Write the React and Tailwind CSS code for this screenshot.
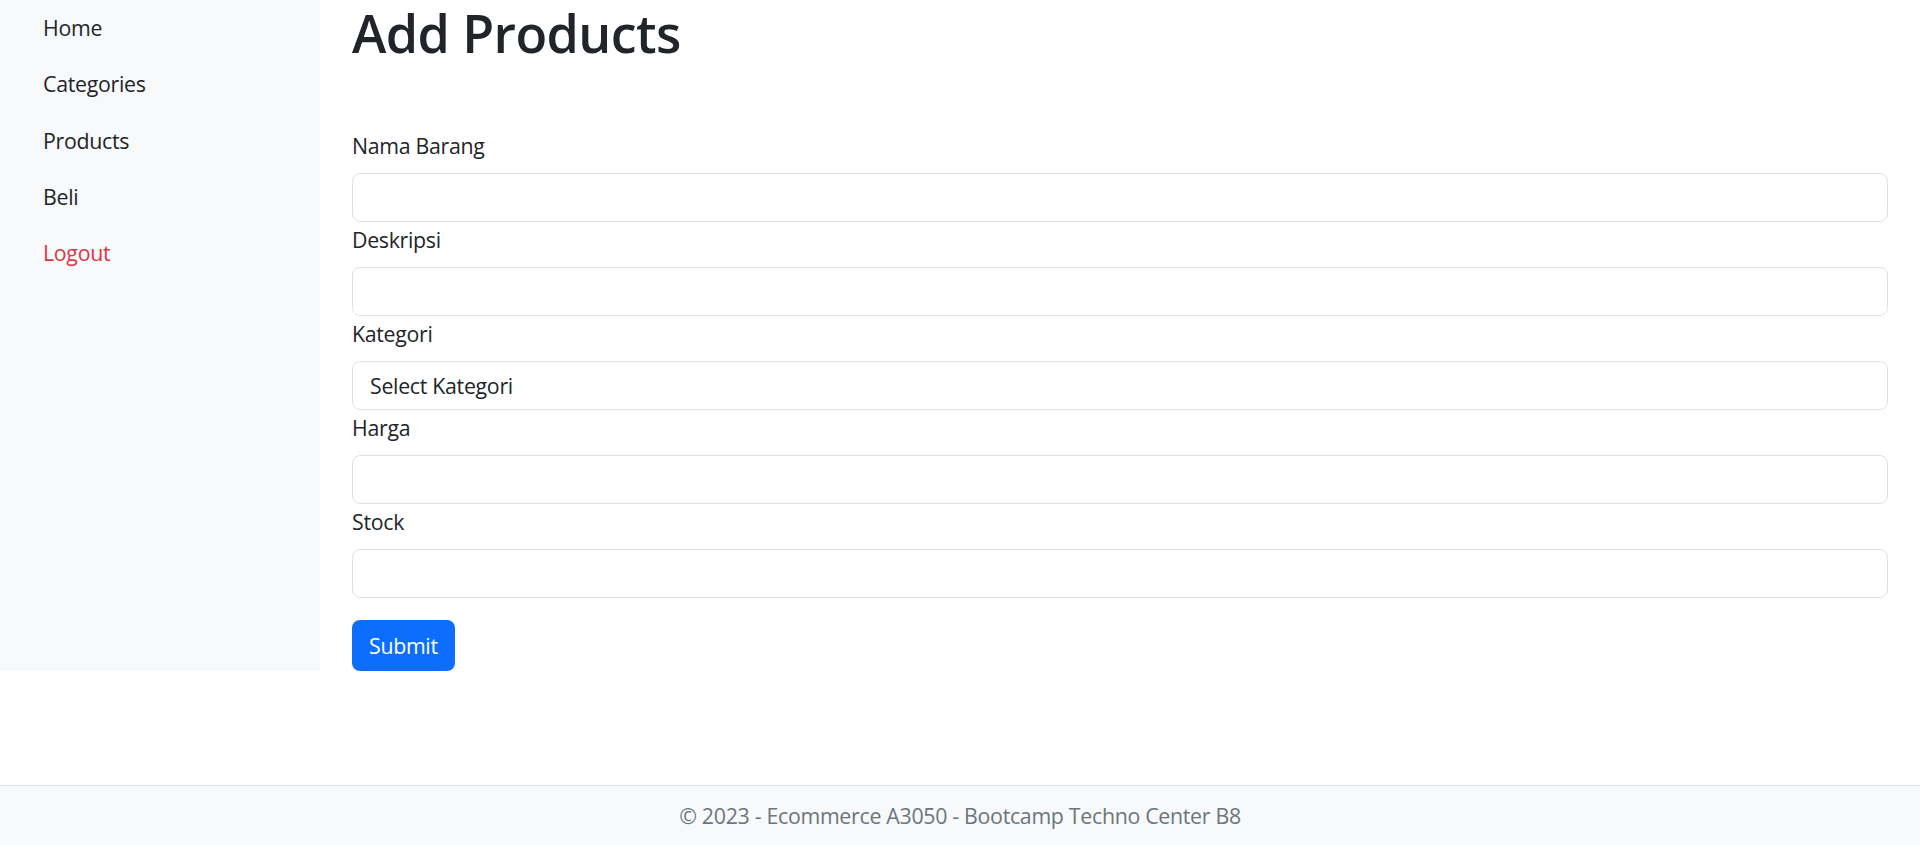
import { useState } from 'react';

const navItems = [
  { label: 'Home' },
  { label: 'Categories' },
  { label: 'Products' },
  { label: 'Beli' },
  { label: 'Logout', danger: true },
];

const fields = [
  { id: 'nama', label: 'Nama Barang' },
  { id: 'deskripsi', label: 'Deskripsi' },
  { id: 'kategori', label: 'Kategori', select: true },
  { id: 'harga', label: 'Harga' },
  { id: 'stock', label: 'Stock' },
];

export default function App() {
  const [form, setForm] = useState({ nama: '', deskripsi: '', kategori: '', harga: '', stock: '' });

  const update = (id) => (e) => setForm({ ...form, [id]: e.target.value });

  return (
    <div className="flex min-h-screen flex-col bg-white font-['Segoe_UI','Open_Sans',sans-serif] text-[21.33px] tracking-[-0.3px] text-[#212529]">
      <div className="flex">
        <aside className="w-[320px] shrink-0 bg-[#f8f9fa]">
          <nav className="flex flex-col">
            {navItems.map((item) => (
              <a
                key={item.label}
                href="#"
                className={`flex h-[56.3px] items-center pl-[43px] leading-[32px] ${
                  item.danger ? 'text-[#dc3545]' : 'text-[#212529]'
                }`}
              >
                {item.label}
              </a>
            ))}
          </nav>
        </aside>

        <main className="flex-1 px-[32px]">
          <h1 className="pt-[2px] text-[52px] font-semibold leading-[62px] tracking-[-0.6px]">Add Products</h1>

          <form className="mt-[64px]" onSubmit={(e) => e.preventDefault()}>
            {fields.map((f) => (
              <div key={f.id}>
                <label htmlFor={f.id} className="mb-[11px] block pt-[2px] leading-[32px]">
                  {f.label}
                </label>
                {f.select ? (
                  <select
                    id={f.id}
                    value={form[f.id]}
                    onChange={update(f.id)}
                    className="block h-[49px] w-full appearance-none rounded-[8px] border border-[#dee2e6] bg-white px-[17px] text-[21.33px] tracking-[-0.3px] text-[#212529] outline-none"
                  >
                    <option value="">Select Kategori</option>
                  </select>
                ) : (
                  <input
                    id={f.id}
                    type="text"
                    value={form[f.id]}
                    onChange={update(f.id)}
                    className="block h-[49px] w-full rounded-[8px] border border-[#dee2e6] bg-white px-[17px] text-[21.33px] outline-none"
                  />
                )}
              </div>
            ))}

            <button
              type="submit"
              className="mt-[22px] h-[51px] rounded-[8px] bg-[#0d6efd] px-[17px] leading-[32px] tracking-[-0.3px] text-white"
            >
              Submit
            </button>
          </form>
        </main>
      </div>

      <footer className="mt-auto flex h-[60px] items-center justify-center border-t border-[#dee2e6] bg-[#f8f9fa] text-[#6c757d]">
        © 2023 - Ecommerce A3050 - Bootcamp Techno Center B8
      </footer>
    </div>
  );
}
